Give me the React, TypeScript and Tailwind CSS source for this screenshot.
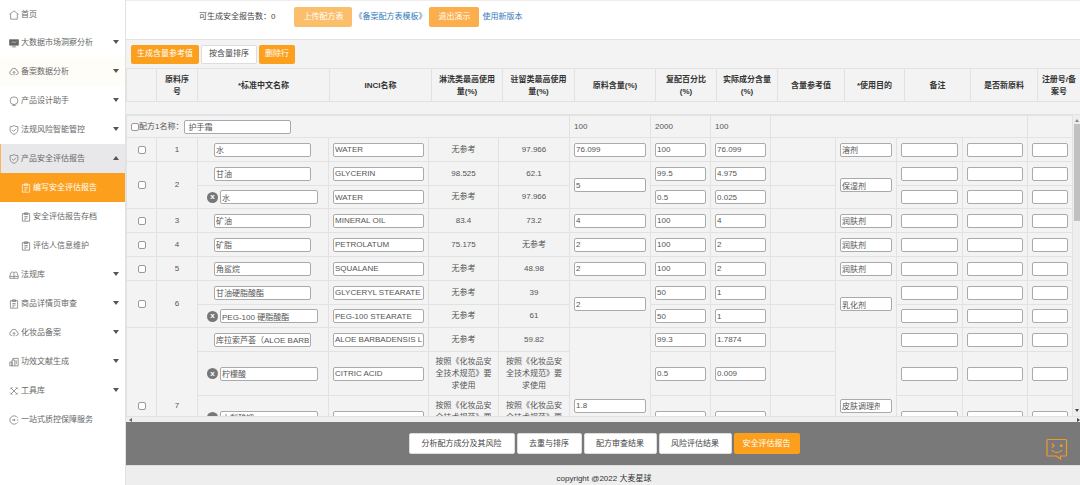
import type { ReactNode } from 'react';

type IconName = 'home' | 'monitor' | 'cloud' | 'bulb' | 'shield' | 'doc' | 'book' | 'chart' | 'tools' | 'service';

const iconPaths: Record<IconName, ReactNode> = {
  home: <path d="M1 8 9 1.5 17 8M3 7v9.5h12V7" />,
  monitor: (
    <>
      <path d="M1 3h16v10H1z" fill="currentColor" />
      <path d="M9 13v3M5 16h8" />
      <path d="m5 9 2.5-2.5L10 9l3-3" stroke="#ddd" />
    </>
  ),
  cloud: (
    <>
      <path d="M6 13.5H4.500a3.500 3.500 0 0 1-.5-6.900 5 5 0 0 1 9.900 0 3.500 3.500 0 0 1-.4 6.900H12" />
      <path d="M9 15V8M6.5 10.5 9 8l2.5 2.5" />
    </>
  ),
  bulb: (
    <>
      <circle cx="9" cy="8.500" r="7" />
      <path d="M6 17h6" />
    </>
  ),
  shield: (
    <>
      <path d="M9 1c2 1.300 4.300 2 7 2v6c0 3.900-3 6.300-7 8-4-1.700-7-4.100-7-8V3c2.700 0 5-.7 7-2Z" />
      <path d="m5.500 8.800 2.700 2.700 4.500-4.700" />
    </>
  ),
  doc: (
    <>
      <path d="M2.5 3h13v13.500h-13zM6 1.500h6v3H6z" />
      <path d="M6 8h6M6 11h6M6 14h3" />
    </>
  ),
  book: (
    <>
      <path d="M1.500 11 3.500 4.500C5.500 3.200 7.500 3.500 9 5c1.500-1.500 3.500-1.800 5.500-.5l2 6.500v4h-15zM9 5v10" />
      <path d="M1.500 11.500h15" />
    </>
  ),
  chart: <path d="M1.500 9h4v7h-4zM5.500 5.500h5V16h-5zM7 5.500v-3h9.500V16h-6M13 6v7" />,
  tools: <path d="m3 3 12 12M15 3 3 15M2 6l4-4M12 2l4 4M2 12l4 4M12 16l4-4" />,
  service: (
    <>
      <path d="M15.500 5a7.500 7.500 0 1 0 0 8" />
      <path d="M5.500 9h6M9.500 7v4M14 9h3" />
    </>
  ),
};

function Icon({ name }: { name: IconName }) {
  return (
    <svg className="size-[10px] shrink-0" viewBox="0 0 18 18" fill="none" stroke="currentColor" strokeWidth="1.2">
      {iconPaths[name]}
    </svg>
  );
}

function Arrow({ up }: { up?: boolean }) {
  return (
    <svg className="w-[6px] h-[4px] ml-auto mb-[2px]" viewBox="0 0 6 4" fill="#555">
      <path d={up ? 'M0 4h6L3 0z' : 'M0 0h6L3 4z'} />
    </svg>
  );
}

const menu: { text: string; icon: IconName; arrow?: 'up' | 'down'; sub?: boolean; style?: string }[] = [
  { text: '首页', icon: 'home', style: 'h-7 text-[#666]' },
  { text: '大数据市场洞察分析', icon: 'monitor', arrow: 'down' },
  { text: '备案数据分析', icon: 'cloud', arrow: 'down', style: 'h-[29px] bg-[#fffdf8] text-[#666]' },
  { text: '产品设计助手', icon: 'bulb', arrow: 'down' },
  { text: '法规风险智能管控', icon: 'shield', arrow: 'down' },
  {
    text: '产品安全评估报告',
    icon: 'shield',
    arrow: 'up',
    style: 'h-[29px] bg-[#e8e8ea] text-[#666] shadow-[inset_1px_0_0_#fdb45a]',
  },
  { text: '编写安全评估报告', icon: 'doc', sub: true, style: 'h-[29px] bg-[#fc9f1d] text-white' },
  { text: '安全评估报告存档', icon: 'doc', sub: true },
  { text: '评估人信息维护', icon: 'doc', sub: true },
  { text: '法规库', icon: 'book', arrow: 'down' },
  { text: '商品详情页审查', icon: 'doc', arrow: 'down' },
  { text: '化妆品备案', icon: 'cloud', arrow: 'down' },
  { text: '功效文献生成', icon: 'chart', arrow: 'down' },
  { text: '工具库', icon: 'tools', arrow: 'down' },
  { text: '一站式质控保障服务', icon: 'service' },
];

function Sidebar() {
  return (
    <nav className="w-[125px] shrink-0 bg-white">
      {menu.map((item) => (
        <a
          key={item.text}
          href="#"
          className={`flex items-center gap-[2px] pt-px pr-[6px] ${item.sub ? 'pl-[21px]' : 'pl-[9px]'} ${item.style ?? 'h-[29px] text-[#666]'}`}
        >
          <Icon name={item.icon} />
          <span>{item.text}</span>
          {item.arrow && <Arrow up={item.arrow === 'up'} />}
        </a>
      ))}
    </nav>
  );
}

const headers: [string, string][] = [
  ['', 'w-[30px]'],
  ['原料序号', 'w-[41px] px-[6px]'],
  ['*标准中文名称', 'w-[132px] px-1'],
  ['INCI名称', 'w-[102px] px-1'],
  ['淋洗类最高使用量(%)', 'w-[71px] px-1'],
  ['驻留类最高使用量(%)', 'w-[72px] px-1'],
  ['原料含量(%)', 'w-[81px] px-1'],
  ['复配百分比(%)', 'w-[61px] px-1'],
  ['实际成分含量(%)', 'w-[61px] px-1'],
  ['含量参考值', 'w-[67px] px-1'],
  ['*使用目的', 'w-[60px] px-1'],
  ['备注', 'w-[66px] px-1'],
  ['是否新原料', 'w-[67px] px-1'],
  ['注册号/备案号', 'w-[43px] px-[2px]'],
];

const bodyCols = [
  'w-[30px]',
  'w-[41px]',
  'w-[131px]',
  'w-[100px]',
  'w-[70px]',
  'w-[71px]',
  'w-[81px]',
  'w-[60px]',
  'w-[60px]',
  'w-[65px]',
  'w-[61px]',
  'w-[66px]',
  'w-[65px]',
  'w-[45px]',
];

const rule = '按照《化妆品安全技术规范》要求使用';

// [中文名, INCI, 淋洗, 驻留, 复配百分比, 实际含量]
type Part = [string, string, string, string, string, string];

const materials: { total: string; purpose: string; parts: Part[] }[] = [
  { total: '76.099', purpose: '溶剂', parts: [['水', 'WATER', '无参考', '97.966', '100', '76.099']] },
  {
    total: '5',
    purpose: '保湿剂',
    parts: [
      ['甘油', 'GLYCERIN', '98.525', '62.1', '99.5', '4.975'],
      ['水', 'WATER', '无参考', '97.966', '0.5', '0.025'],
    ],
  },
  { total: '4', purpose: '润肤剂', parts: [['矿油', 'MINERAL OIL', '83.4', '73.2', '100', '4']] },
  { total: '2', purpose: '润肤剂', parts: [['矿脂', 'PETROLATUM', '75.175', '无参考', '100', '2']] },
  { total: '2', purpose: '润肤剂', parts: [['角鲨烷', 'SQUALANE', '无参考', '48.98', '100', '2']] },
  {
    total: '2',
    purpose: '乳化剂',
    parts: [
      ['甘油硬脂酸酯', 'GLYCERYL STEARATE', '无参考', '39', '50', '1'],
      ['PEG-100 硬脂酸酯', 'PEG-100 STEARATE', '无参考', '61', '50', '1'],
    ],
  },
  {
    total: '1.8',
    purpose: '皮肤调理剂',
    parts: [
      ['库拉索芦荟（ALOE BARBADENSIS）', 'ALOE BARBADENSIS LEAF', '无参考', '59.82', '99.3', '1.7874'],
      ['柠檬酸', 'CITRIC ACID', rule, rule, '0.5', '0.009'],
      ['山梨酸钾', '', rule, rule, '', ''],
      ['', '', rule, rule, '', ''],
    ],
  },
];

function Field({ label, value = '', className = 'w-full px-px' }: { label: string; value?: string; className?: string }) {
  return (
    <input
      type="text"
      aria-label={label}
      defaultValue={value}
      className={`block h-[14px] rounded-[2px] border border-[#aaa] bg-white text-[#555] ${className}`}
    />
  );
}

function Check({ label }: { label: string }) {
  return (
    <input
      type="checkbox"
      aria-label={label}
      className="block size-2 shrink-0 appearance-none rounded-[2px] border border-[#999] bg-white checked:bg-[#fc9f1d]"
    />
  );
}

const cell = 'border border-[#e2e2e2] px-1';

function rowHeight(rinse: string, i: number) {
  if (rinse === rule) return 'h-[44px]';
  return i === 0 ? 'h-6' : 'h-[23px]';
}

function MaterialRows({ index }: { index: number }) {
  const { total, purpose, parts } = materials[index];
  const span = parts.length;
  return (
    <>
      {parts.map(([name, inci, rinse, leave, ratio, actual], i) => (
        <tr key={i} className={rowHeight(rinse, i)}>
          {i === 0 && (
            <>
              <td rowSpan={span} className={cell}>
                <div className="flex justify-center">
                  <Check label={`选择原料${index + 1}`} />
                </div>
              </td>
              <td rowSpan={span} className={`${cell} text-center`}>{index + 1}</td>
            </>
          )}
          <td className={cell}>
            {i === 0 ? (
              <div className="pl-3">
                <Field label="标准中文名称" value={name} className="w-[97px] px-px" />
              </div>
            ) : (
              <div className="flex items-center gap-[2px] pl-[5px]">
                <button
                  aria-label="删除"
                  className="flex size-[11px] items-center justify-center rounded-full bg-[#777] font-bold leading-none text-white"
                >
                  x
                </button>
                <Field label="标准中文名称" value={name} className="w-[98px] px-px" />
              </div>
            )}
          </td>
          <td className={cell}><Field label="INCI名称" value={inci} /></td>
          <td className={`${cell} text-center`}>{rinse}</td>
          <td className={`${cell} text-center`}>{leave}</td>
          {i === 0 && <td rowSpan={span} className={cell}><Field label="原料含量" value={total} /></td>}
          <td className={cell}><Field label="复配百分比" value={ratio} /></td>
          <td className={cell}><Field label="实际成分含量" value={actual} /></td>
          <td className={cell}></td>
          {i === 0 && (
            <td rowSpan={span} className={cell}>
              <Field label="使用目的" value={purpose} className="w-full pl-px pr-[11px]" />
            </td>
          )}
          <td className={cell}><Field label="备注" /></td>
          <td className={cell}><Field label="是否新原料" /></td>
          <td className={cell}><Field label="注册号/备案号" /></td>
        </tr>
      ))}
    </>
  );
}

function FormulaTable() {
  return (
    <table className="w-full table-fixed border-collapse">
      <colgroup>
        {bodyCols.map((w, i) => <col key={i} className={w} />)}
      </colgroup>
      <tbody>
        <tr className="h-[22px]">
          <td colSpan={6} className={cell}>
            <div className="flex items-center">
              <input
                id="formula"
                type="checkbox"
                className="size-2 appearance-none rounded-[2px] border border-[#999] bg-white checked:bg-[#fc9f1d]"
              />
              <label htmlFor="formula" className="mr-px">配方1名称：</label>
              <Field label="配方名称" value="护手霜" className="w-[107px] px-[3px]" />
            </div>
          </td>
          <td className={cell}>100</td>
          <td className={cell}>2000</td>
          <td className={cell}>100</td>
          <td colSpan={4} className={cell}></td>
          <td className={cell}></td>
        </tr>
        {materials.map((_, i) => <MaterialRows key={i} index={i} />)}
      </tbody>
    </table>
  );
}

const orange = 'rounded-[2px] bg-[#fc9f1d] text-white';
const plain = 'rounded-[2px] border border-[#ddd] bg-white text-[#444]';

export default function App() {
  return (
    <div className="flex h-screen bg-white font-['Liberation_Sans','Noto_Sans_CJK_SC',sans-serif] text-[8px] leading-[12px] text-[#555]">
      <Sidebar />
      <main className="flex min-w-0 flex-1 flex-col border-l border-[#e2e2e2] bg-[#f3f3f3]">
        <header className="flex h-[39px] shrink-0 items-start border-t border-[#eee] bg-white pt-[6px] pl-[73px]">
          <div className="flex h-5 items-center">
            <span className="text-[#444]">可生成安全报告数：0</span>
            <button className="ml-[19px] h-5 w-[58px] rounded-[2px] bg-[#fbbf6b] text-white">上传配方表</button>
            <a href="#" className="ml-[2px] text-[#337ab7]">《备案配方表模板》</a>
            <button className="ml-[3px] h-5 w-[50px] rounded-[2px] bg-[#fcae4c] text-white">退出演示</button>
            <a href="#" className="ml-[3px] text-[#337ab7]">使用新版本</a>
          </div>
        </header>

        <div className="flex h-[29px] shrink-0 items-center gap-[2px] border-t border-[#e2e2e2] pl-[5px]">
          <button className={`${orange} h-[19px] w-[68px]`}>生成含量参考值</button>
          <button className={`${plain} h-[19px] w-[56px]`}>按含量排序</button>
          <button className={`${orange} h-[19px] w-[36px]`}>删除行</button>
        </div>

        <table className="w-full shrink-0 table-fixed border-collapse text-[#333]">
          <thead>
            <tr className="h-[33px]">
              {headers.map(([text, style]) => (
                <th key={text} className={`${style} border border-[#e2e2e2] pt-px font-bold`}>{text}</th>
              ))}
            </tr>
          </thead>
        </table>

        <div className="mt-3 flex min-h-0 flex-1 border-t border-[#e2e2e2]">
          <div className="min-w-0 flex-1 overflow-hidden">
            <FormulaTable />
          </div>
          {/* vertical scrollbar */}
          <div className="flex w-[7px] shrink-0 flex-col items-center bg-[#eee] py-1">
            <svg className="h-[3px] w-[4px]" viewBox="0 0 4 3" fill="#888"><path d="M0 3h4L2 0z" /></svg>
            <div className="mt-[2px] h-[97px] w-[6px] bg-[#c1c1c1]"></div>
            <svg className="mt-auto h-[3px] w-[4px]" viewBox="0 0 4 3" fill="#444"><path d="M0 0h4L2 3z" /></svg>
          </div>
        </div>
        {/* horizontal scrollbar */}
        <div className="flex h-[6px] shrink-0 items-end justify-between border-t border-[#e2e2e2] bg-[#eee] pl-[3px]">
          <svg className="h-[4px] w-[3px]" viewBox="0 0 3 4" fill="#666"><path d="M3 0v4L0 2z" /></svg>
          <svg className="h-[4px] w-[3px]" viewBox="0 0 3 4" fill="#444"><path d="M0 0v4l3-2z" /></svg>
        </div>

        <div className="relative flex h-[43px] shrink-0 items-center justify-center gap-[2px] bg-[#797979] pl-[2px]">
          <button className={`${plain} h-[21px] w-[106px]`}>分析配方成分及其风险</button>
          <button className={`${plain} h-[21px] w-[65px]`}>去重与排序</button>
          <button className={`${plain} h-[21px] w-[73px]`}>配方审查结果</button>
          <button className={`${plain} h-[21px] w-[73px]`}>风险评估结果</button>
          <button className={`${orange} h-[21px] w-[66px]`}>安全评估报告</button>
          <button aria-label="在线客服" className="absolute right-3 bottom-1">
            <svg className="size-[23px]" viewBox="0 0 23 23" fill="none" stroke="#f0982a" strokeWidth="1.2">
              <path d="M3 1.500h17.500a1 1 0 0 1 1 1v14.500a1 1 0 0 1-1 1h-5V21l-4-3H3a1 1 0 0 1-1-1V2.500a1 1 0 0 1 1-1Z" />
              <path d="m7 5.500 2 2-2 2M6.500 12c2.500 3.500 8 3.500 10.500 0" />
              <path d="M15 6.500h2.500V9H15z" fill="#f0982a" stroke="none" />
            </svg>
          </button>
        </div>

        <footer className="flex h-5 shrink-0 items-center justify-center border-t border-[#ddd] bg-[#eee] pt-[6px] pl-[2px] text-[#333]">
          copyright @2022 大麦星球
        </footer>
      </main>
    </div>
  );
}
